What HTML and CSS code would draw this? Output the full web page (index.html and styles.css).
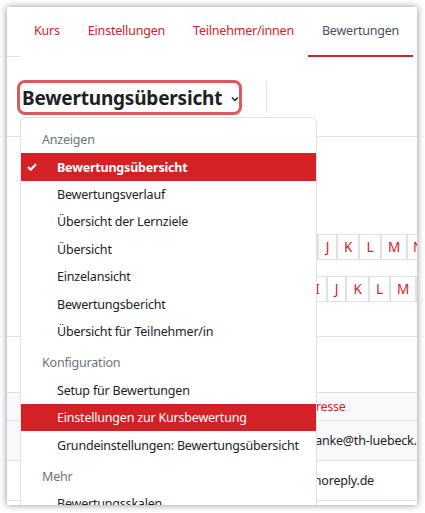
FILE: index.html
```html
<!DOCTYPE html>
<html lang="de">
<head>
    <meta charset="utf-8">
    <title>Bewertungsübersicht</title>
    <link rel="stylesheet" href="styles.css">
</head>
<body>
    <div class="frame">
        <div class="tabs">
            <span class="tab-edge"></span>
            <a class="tab">Kurs</a>
            <a class="tab">Einstellungen</a>
            <a class="tab">Teilnehmer/innen</a>
            <a class="tab active">Bewertungen</a>
        </div>

        <div class="page-header">
            <div class="report-select">
                <h2>Bewertungsübersicht</h2>
                <svg class="chevron" width="8" height="6" viewBox="0 0 8 6">
                    <polyline points="1,1.5 4,4.5 7,1.5" fill="none" stroke="#1d2125" stroke-width="1.6"/>
                </svg>
            </div>
            <span class="divider"></span>
        </div>

        <div class="content">
            <div class="initials first-row">
                <a>H</a><a>I</a><a class="narrow">J</a><a>K</a><a>L</a><a class="wide">M</a><a>N</a>
            </div>
            <div class="initials second-row">
                <a>H</a><a class="narrow">I</a><a class="narrow">J</a><a class="k">K</a><a class="l">L</a><a class="wide">M</a><a>N</a>
            </div>
            <div class="pager"></div>

            <div class="grades">
                <div class="row head"><span class="email">E-Mail-Adresse</span></div>
                <div class="row striped"><span class="email">annette.franke@th-luebeck.de</span></div>
                <div class="row"><span class="email">student@noreply.de</span></div>
            </div>
        </div>

        <div class="dropdown">
            <div class="group">Anzeigen</div>
            <a class="item selected">
                <svg class="check" width="10" height="8" viewBox="0 0 10 8">
                    <polyline points="1,4 3.8,6.6 9,1.2" fill="none" stroke="#fff" stroke-width="2.2"/>
                </svg>
                Bewertungsübersicht
            </a>
            <a class="item">Bewertungsverlauf</a>
            <a class="item">Übersicht der Lernziele</a>
            <a class="item">Übersicht</a>
            <a class="item">Einzelansicht</a>
            <a class="item">Bewertungsbericht</a>
            <a class="item">Übersicht für Teilnehmer/in</a>
            <div class="group">Konfiguration</div>
            <a class="item">Setup für Bewertungen</a>
            <a class="item hover">Einstellungen zur Kursbewertung</a>
            <a class="item">Grundeinstellungen: Bewertungsübersicht</a>
            <div class="group">Mehr</div>
            <a class="item">Bewertungsskalen</a>
        </div>
    </div>
</body>
</html>
```

FILE: styles.css
```css
body {
    margin: 0;
    background-color: white;
    font-family: "Noto Sans", "Open Sans", sans-serif;
    font-size: 12.5px;
    letter-spacing: -0.2px;
    color: #1d2125;
}

.frame {
    position: relative;
    margin: 7px;
    width: 410px;
    height: 498px;
    overflow: hidden;
    background-color: white;
    box-shadow: 0 0 7px rgba(0, 0, 0, 0.45);
}

/* tabs */

.tabs {
    display: flex;
    height: 50px;
}

.tab-edge {
    flex-shrink: 0;
    width: 13px;
    border-bottom: 1px solid #dee2e6;
}

.tab {
    flex-shrink: 0;
    padding: 0 14px;
    line-height: 48px;
    white-space: nowrap;
    color: #d42027;
    border-bottom: 2px solid transparent;
}

.tab.active {
    color: #495057;
    border-bottom-color: #d42027;
}

/* header */

.page-header {
    display: flex;
    align-items: center;
    padding: 23px 0 21px 10px;
    border-bottom: 1px solid #dee2e6;
}

.report-select {
    display: flex;
    align-items: center;
    box-sizing: border-box;
    width: 225px;
    height: 35px;
    padding-left: 2px;
    border: 3px solid #d95a5c;
    border-radius: 8px;
}

.report-select h2 {
    margin: 0;
    font-size: 19px;
    font-weight: bold;
    letter-spacing: -0.2px;
}

.chevron {
    margin-left: 9px;
    margin-top: 2px;
}

.divider {
    width: 1px;
    height: 31px;
    margin-left: 24px;
    background-color: #dee2e6;
}

/* page behind the menu */

.content {
    padding-top: 97px;
}

.initials {
    display: flex;
    height: 26px;
    font-size: 13.5px;
}

.initials a {
    flex-shrink: 0;
    box-sizing: border-box;
    width: 22px;
    line-height: 24px;
    text-align: center;
    color: #d42027;
    border: 1px solid #dee2e6;
}

.initials .wide {
    width: 26px;
}

.initials .narrow {
    width: 19px;
}

.first-row {
    padding-left: 267px;
}

.second-row {
    margin-top: 16px;
    padding-left: 279px;
}

.second-row .k {
    width: 23px;
}

.second-row .l {
    width: 21px;
}

.pager {
    height: 34px;
    border-bottom: 1px solid #dee2e6;
}

.grades {
    margin-top: 55px;
    border-bottom: 1px solid #dee2e6;
}

.row {
    height: 39px;
    line-height: 39px;
    border-top: 1px solid #dee2e6;
}

.row.head {
    height: 27px;
    line-height: 27px;
    background-color: #f8f9fa;
}

.row.head .email {
    padding-left: 255px;
    color: #d42027;
}

.row.striped {
    background-color: #f8f9fa;
}

.email {
    padding-left: 252px;
    white-space: nowrap;
}

/* menu */

.dropdown {
    position: absolute;
    left: 13px;
    top: 110px;
    width: 297px;
    box-sizing: border-box;
    padding-top: 8px;
    background-color: white;
    border: 1px solid #dee2e6;
    border-radius: 5px;
}

.group {
    line-height: 27.4px;
    padding-left: 21px;
    color: #6a737b;
}

.item + .group {
    margin-top: 4px;
}

.item {
    display: flex;
    align-items: center;
    height: 27.4px;
    padding-left: 36px;
    position: relative;
    white-space: nowrap;
}

.item.selected {
    background-color: #d32125;
    color: white;
    font-weight: bold;
}

.item.hover {
    background-color: #d32125;
    color: white;
}

.check {
    position: absolute;
    left: 6px;
    top: 10px;
}
```
